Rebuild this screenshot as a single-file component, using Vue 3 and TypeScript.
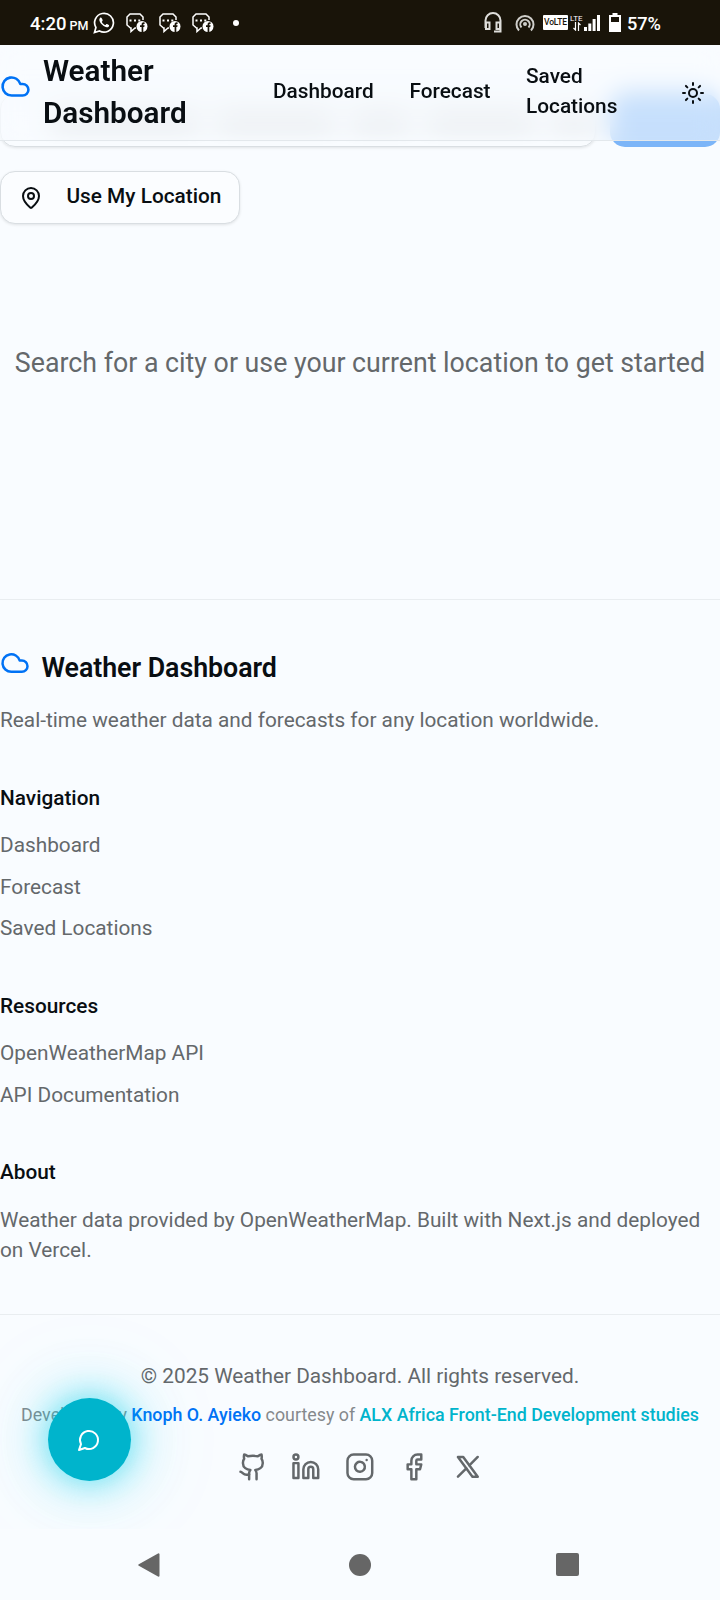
<script setup lang="ts">
interface Section { title: string; links: string[] }
const sections: Section[] = [
  { title: 'Navigation', links: ['Dashboard', 'Forecast', 'Saved Locations'] },
  { title: 'Resources', links: ['OpenWeatherMap API', 'API Documentation'] },
]
const hints = [
  { w: 150 }, { w: 120 }, { w: 60 }, { w: 110 }, { w: 44 },
]
const socials: { name: string; paths: string[] }[] = [
  { name: 'GitHub', paths: ['M15 22v-4a4.8 4.8 0 0 0-1-3.5c3 0 6-2 6-5.5.08-1.25-.27-2.48-1-3.5.28-1.15.28-2.35 0-3.5 0 0-1 0-3 1.5-2.64-.5-5.36-.5-8 0C6 2 5 2 5 2c-.3 1.15-.3 2.35 0 3.5A5.403 5.403 0 0 0 4 9c0 3.5 3 5.5 6 5.5-.39.49-.68 1.05-.85 1.65-.17.6-.22 1.23-.15 1.85v4', 'M9 18c-4.51 2-5-2-7-2'] },
  { name: 'LinkedIn', paths: ['M16 8a6 6 0 0 1 6 6v7h-4v-7a2 2 0 0 0-4 0v7h-4v-7a6 6 0 0 1 6-6z', 'M2 9h4v12H2z', 'M4 2a2 2 0 1 1 0 4a2 2 0 1 1 0-4z'] },
  { name: 'Instagram', paths: ['M7 2h10a5 5 0 0 1 5 5v10a5 5 0 0 1-5 5H7a5 5 0 0 1-5-5V7a5 5 0 0 1 5-5z', 'M16 11.37A4 4 0 1 1 12.63 8 4 4 0 0 1 16 11.37z', 'M17.5 6.5h.01'] },
  { name: 'Facebook', paths: ['M18 2h-3a5 5 0 0 0-5 5v3H7v4h3v8h4v-8h3l1-4h-4V7a1 1 0 0 1 1-1h3z'] },
  { name: 'X', paths: ['M4 4l11.733 16h4.267l-11.733-16z', 'M4 20l6.768-6.768m2.46-2.46L20 4'] },
]
</script>

<template>
  <div class="screen">
    <div class="status">
      <span class="time">4:20</span><span class="pm">PM</span>
      <svg class="wa" viewBox="0 0 22 22" fill="none" stroke="#fff" stroke-width="1.7"><path d="M1.5 20.5l1.4-5A9.4 9.4 0 1 1 6.5 19z" /><path d="M7 6c-1.8 2 .3 5.100 2.500 7.100s4.800 3.100 6.300 1.300c.9-1.100-.1-1.500-1.300-2.100s-1.200.2-2 .8c-1.700-.5-3-1.800-3.700-3.400.7-.8 1.200-1 .6-2.200S8.200 4.700 7 6z" fill="#fff" stroke="none" /></svg>
      <svg v-for="n in 3" :key="n" class="msg" viewBox="0 0 22 20"><path d="M10 15h-1l-4 3.500V15H4.500L1 12V4l3-3h10l3 3v3" fill="none" stroke="#fff" stroke-width="1.500" /><path d="M3.500 6.500h2v2h-2zM8 6.500h2v2H8zM12.300 6.500h2v2h-2z" fill="#fff" /><circle cx="16" cy="13.500" r="5.500" fill="#fff" /><path d="M15.600 19v-5h-1.600v-1.800h1.600c-.2-2.500 1-3.200 3-2.800v1.500c-1.200-.1-1.300.2-1.300 1.300h1.300l-.3 1.800h-1v5z" fill="#191409" /></svg>
      <span class="dot" />
      <span class="grow" />
      <svg class="head" viewBox="0 0 18 21" fill="none" stroke="#deddda" stroke-width="2"><path d="M1.500 16V8.500a7.500 7.500 0 0 1 15 0V16M2 10.500h3.500V17H2zM16 10.500h-3.500V17H16zM16.500 16v3.500H10" /></svg>
      <svg class="cast" viewBox="0 0 20 18" fill="none" stroke="#cfceca" stroke-width="2"><path d="M4 16.500a8.500 8.500 0 1 1 12 0M6.500 13.500a4.700 4.700 0 1 1 7 0" /><circle cx="10" cy="10" r="2" fill="#cfceca" stroke="none" /></svg>
      <span class="volte">VoLTE</span>
      <span class="lte"><span>LTE</span><svg viewBox="0 0 8 9" fill="none" stroke="#fff" stroke-width="1.200"><path d="M2.500 0v8L.5 6M5.500 9V1l2 2" /></svg></span>
      <svg class="signal" viewBox="0 0 16 16" fill="#fff"><path d="M0 12h3v4H0zM4.300 8.500h3V16h-3zM8.600 4h3v12h-3zM13 0h3v16h-3z" /></svg>
      <svg class="batt" viewBox="0 0 12 19"><path d="M3.500 0h5v2H12v17H0V2h3.500z" fill="#fff" /><path d="M2 4h8v5H2z" fill="#191409" /></svg>
      <span class="pct">57%</span>
    </div>

    <div class="viewport">
      <header class="header">
        <div class="brand">
          <svg class="ic cloud" viewBox="0 0 24 24"><path d="M17.500 19H9a7 7 0 1 1 6.710-9h1.790a4.500 4.500 0 1 1 0 9Z" /></svg>
          <span>Weather<br />Dashboard</span>
        </div>
        <nav>
          <a class="n1">Dashboard</a><a class="n2">Forecast</a><a class="n3">Saved<br />Locations</a>
        </nav>
        <svg class="ic sun" viewBox="0 0 24 24"><circle cx="12" cy="12" r="4" /><path d="M12 2v2M12 20v2M4.930 4.930l1.410 1.410M17.660 17.660l1.410 1.410M2 12h2M20 12h2M6.340 17.660l-1.410 1.410M19.070 4.930l-1.410 1.410" /></svg>
      </header>

      <main>
        <div class="search">
          <div class="field"><i v-for="(h, i) in hints" :key="i" :style="{ width: h.w + 'px' }" /></div>
          <div class="submit" />
        </div>
        <button class="locate">
          <svg class="ic" viewBox="0 0 24 24"><path d="M20 10c0 4.993-5.539 10.193-7.399 11.799a1 1 0 0 1-1.202 0C9.539 20.193 4 14.993 4 10a8 8 0 0 1 16 0" /><circle cx="12" cy="10" r="3" /></svg>
          <span>Use My Location</span>
        </button>
        <p class="empty">Search for a city or use your current location to get started</p>
      </main>

      <footer>
        <div class="fbrand">
          <svg class="ic cloud" viewBox="0 0 24 24"><path d="M17.500 19H9a7 7 0 1 1 6.710-9h1.790a4.500 4.500 0 1 1 0 9Z" /></svg>
          <span>Weather Dashboard</span>
        </div>
        <p class="tagline">Real-time weather data and forecasts for any location worldwide.</p>
        <section v-for="s in sections" :key="s.title" class="section">
          <h3>{{ s.title }}</h3>
          <ul><li v-for="l in s.links" :key="l">{{ l }}</li></ul>
        </section>
        <section class="section last">
          <h3>About</h3>
          <p class="about">Weather data provided by OpenWeatherMap. Built with Next.js and deployed on Vercel.</p>
        </section>
        <div class="legal">
          <p class="copy">© 2025 Weather Dashboard. All rights reserved.</p>
          <p class="dev">Developed by <b class="blue">Knoph O. Ayieko</b> courtesy of <b class="cyan">ALX Africa Front-End Development studies</b></p>
          <div class="socials">
            <svg v-for="s in socials" :key="s.name" class="ic" viewBox="0 0 24 24"><path v-for="p in s.paths" :key="p" :d="p" /></svg>
          </div>
        </div>
      </footer>
      <button class="chat"><svg class="ic" viewBox="0 0 24 24"><path d="M7.900 20A9 9 0 1 0 4 16.100L2 22Z" /></svg></button>
    </div>

    <div class="sysnav">
      <svg viewBox="0 0 22 24"><path d="M20.500 1.300v21.400L1.300 12z" fill="#666" stroke="#666" stroke-width="2" stroke-linejoin="round" /></svg>
      <span class="home" />
      <span class="recent" />
    </div>
  </div>
</template>

<style>
body { margin: 0; background: #f9fcff; }
</style>
<style scoped>
.screen { width: 720px; height: 1600px; background: #f9fcff; color: #090e12; font-family: Roboto, "Liberation Sans", sans-serif; font-size: 20.800px; line-height: 30px; display: flex; flex-direction: column; overflow: hidden; }
p, h3, ul { margin: 0; padding: 0; }
li { list-style: none; }
button { font: inherit; color: inherit; padding: 0; border: 0; }
.ic { fill: none; stroke: currentColor; stroke-width: 2; stroke-linecap: round; stroke-linejoin: round; flex: none; display: block; }
.status { height: 45px; flex: none; background: #191409; color: #fff; display: flex; align-items: center; box-sizing: border-box; padding: 0 59px 0 30px; }
.grow { flex: 1; }
.time { font-size: 18.500px; font-weight: 500; margin-top: 3px; }
.pm { font-size: 12.500px; font-weight: 500; margin: 6px 0 0 3px; }
.wa { width: 22px; height: 22px; margin-left: 4.500px; }
.msg { width: 22px; height: 20px; margin-left: 11px; }
.dot { width: 6px; height: 6px; border-radius: 50%; background: #fff; margin-left: 19px; }
.head { width: 18px; height: 21px; margin-right: 13px; }
.cast { width: 20px; height: 18px; margin-right: 8px; }
.volte { background: #fff; color: #191409; width: 25px; height: 15px; border-radius: 1px; font-size: 8.500px; line-height: 15px; font-weight: 500; text-align: center; letter-spacing: -0.200px; }
.lte { width: 14px; height: 16px; margin-left: 2px; font-size: 8px; line-height: 7px; display: flex; flex-direction: column; }
.lte svg { width: 8px; height: 9px; margin-left: 3px; }
.signal { width: 16px; height: 16px; }
.batt { width: 12px; height: 19px; margin: 0 6px 0 9px; }
.pct { font-size: 18.200px; font-weight: 500; margin-top: 3px; }
.viewport { height: 1484px; flex: none; position: relative; overflow: hidden; }
.header { position: absolute; z-index: 2; top: 0; left: 0; right: 0; height: 96px; box-sizing: border-box; border-bottom: 1px solid #e3e8ec; background: rgba(249, 252, 255, .6); backdrop-filter: blur(12px); display: flex; }
.brand { display: flex; width: 273px; font-size: 29.700px; line-height: 42px; font-weight: 600; letter-spacing: 0; padding-top: 5px; height: 84px; }
.cloud { color: #0072f5; }
.brand .cloud { width: 31px; height: 31px; margin: 21px 12px 0 0; }
nav { display: flex; align-items: center; font-weight: 500; padding-bottom: 4px; }
.n1 { width: 136.500px; }
.n2 { width: 116.500px; }
.n3 { width: 155px; }
.sun { width: 24px; height: 24px; margin-top: 36px; }
main { height: 555px; border-bottom: 1px solid #e9edf0; box-sizing: border-box; display: flex; flex-direction: column; align-items: flex-start; padding-top: 49px; }
.search { display: flex; gap: 14px; width: 720px; height: 53px; }
.field { width: 596px; box-sizing: border-box; border: 1px solid #d9dee2; border-radius: 15px; box-shadow: 0 1px 3px rgba(0, 0, 0, .1); display: flex; align-items: center; gap: 16px; padding-left: 50px; }
.field i { height: 14px; background: #8b8f93; opacity: .45; filter: blur(8px); }
.submit { width: 110px; border-radius: 15px; background: #7cb5f8; box-shadow: 0 -8px 10px -4px rgba(124, 181, 248, .5); clip-path: inset(-30px 0 0 0); }
.locate { margin-top: 24px; width: 240px; height: 53px; box-sizing: border-box; border: 1px solid #d9dee2; border-radius: 15px; background: #fbfdff; box-shadow: 0 1px 3px rgba(0, 0, 0, .1); display: flex; align-items: center; font-weight: 500; }
.locate .ic { width: 24px; height: 24px; margin: 0 23.500px 0 18px; }
.locate span { margin-top: -3px; }
.empty { width: 720px; text-align: center; font-size: 26.750px; line-height: 40px; color: #64686b; margin-top: 119px; }
.fbrand { display: flex; font-size: 26.750px; line-height: 40px; font-weight: 600; letter-spacing: -0.030px; padding-top: 48px; }
.fbrand .cloud { width: 30px; height: 30px; margin: 0 11.500px 0 0; }
.tagline, .section li, .about, .copy { color: #64686b; }
.tagline { margin-top: 17px; }
.section h3 { font-size: 20.800px; font-weight: 500; margin: 48px 0 17px; }
.section.last h3 { margin: 47px 0 18px; }
.section li + li { margin-top: 11.500px; }
.legal { margin-top: 49px; border-top: 1px solid #e9edf0; padding-top: 46px; display: flex; flex-direction: column; align-items: center; }
.dev { font-size: 17.830px; line-height: 26px; color: #85898c; margin-top: 11px; white-space: nowrap; }
.dev b { font-weight: 500; }
.blue { color: #0072f5; }
.cyan { color: #00b4cc; }
.socials { display: flex; gap: 24px; margin-top: 24px; color: #64686b; }
.socials .ic { width: 29.700px; height: 29.700px; }
.chat { position: absolute; left: 48px; top: 1353px; width: 83px; height: 83px; border-radius: 50%; background: #00b4cc; color: #fff; display: flex; align-items: center; justify-content: center; box-shadow: 0 0 30px rgba(0, 210, 235, .45), 0 0 60px rgba(0, 210, 235, .42), 0 0 120px rgba(0, 190, 235, .12); }
.chat .ic { width: 24px; height: 24px; margin-right: 1px; }
.sysnav { height: 71px; display: flex; align-items: center; }
.sysnav svg { width: 22px; height: 24px; margin-left: 138px; }
.home { width: 22px; height: 22px; border-radius: 50%; background: #666; margin-left: 189px; }
.recent { width: 23px; height: 23px; border-radius: 2px; background: #666; margin-left: 185px; }
</style>
